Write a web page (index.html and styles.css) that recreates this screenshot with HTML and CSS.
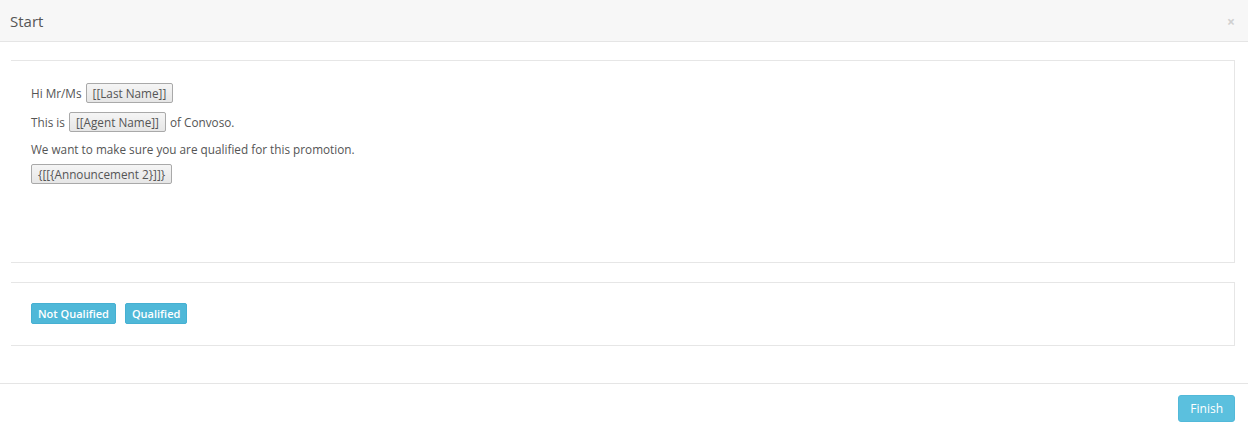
FILE: index.html
```html
<!DOCTYPE html>
<html lang="en">
<head>
    <meta charset="UTF-8">
    <title>Start</title>
    <link rel="stylesheet" href="styles.css">
</head>
<body>
    <div class="modal">
        <!-- Header -->
        <div class="modal-header">
            <span class="modal-title">Start</span>
            <span class="close">&times;</span>
        </div>

        <div class="modal-body">
            <!-- Script text -->
            <div class="panel panel-script">
                <p class="line">Hi Mr/Ms <span class="tag">[[Last Name]]</span></p>
                <p class="line">This is <span class="tag">[[Agent Name]]</span> of Convoso.</p>
                <p class="line plain">We want to make sure you are qualified for this promotion.</p>
                <p class="line"><span class="tag">{[[{Announcement 2}]]}</span></p>
            </div>

            <!-- Answers -->
            <div class="panel panel-answers">
                <button class="btn-info">Not Qualified</button>
                <button class="btn-info">Qualified</button>
            </div>
        </div>

        <!-- Footer -->
        <div class="modal-footer">
            <button class="btn-finish">Finish</button>
        </div>
    </div>
</body>
</html>
```

FILE: styles.css
```css
body {
    margin: 0;
    font-family: 'Open Sans', sans-serif;
    font-size: 11.75px;
    color: #555;
    background-color: #fff;
}

.modal-header {
    height: 41px;
    background-color: #f7f7f7;
    border-bottom: 1px solid #e5e5e5;
    display: flex;
    align-items: center;
    justify-content: space-between;
    padding: 0 13px 0 10px;
}

.modal-title {
    font-size: 15px;
    color: #555;
}

.close {
    font-size: 14px;
    font-weight: bold;
    color: #d0d0d0;
    margin-top: 2px;
}

.modal-body {
    padding: 18px 13px 0 11px;
}

.panel {
    border: 1px solid #e6e6e6;
    border-left: none;
    box-sizing: border-box;
    padding: 0 20px;
}

.panel-script {
    height: 203px;
    padding-top: 22px;
}

.line {
    margin: 0 0 9px;
    line-height: 20px;
    display: flex;
    align-items: center;
    gap: 4px;
}

.line.plain {
    line-height: 16px;
    margin-bottom: 7px;
}

.tag {
    display: inline-block;
    height: 20px;
    line-height: 18px;
    box-sizing: border-box;
    padding: 0 6px;
    border: 1px solid #a9a9a9;
    border-radius: 2px;
    background: linear-gradient(#f5f5f5, #e6e6e6);
    color: #555;
}

.panel-answers {
    margin-top: 19px;
    height: 64px;
    padding-top: 20px;
    display: flex;
    align-items: flex-start;
    gap: 9px;
}

.btn-info {
    height: 21px;
    padding: 0 6px;
    font-family: 'Open Sans', sans-serif;
    font-size: 11px;
    font-weight: 600;
    color: #fff;
    background-color: #4fb8d8;
    border: 1px solid #46b0d2;
    border-radius: 2px;
    cursor: pointer;
}

.modal-footer {
    margin-top: 37px;
    border-top: 1px solid #e5e5e5;
    padding: 11px 13px 0;
    display: flex;
    justify-content: flex-end;
}

.btn-finish {
    height: 27px;
    padding: 0 11px;
    font-family: 'Open Sans', sans-serif;
    font-size: 12px;
    color: #fff;
    background-color: #5bc0de;
    border: 1px solid #52b9d9;
    border-radius: 3px;
    cursor: pointer;
}
```
